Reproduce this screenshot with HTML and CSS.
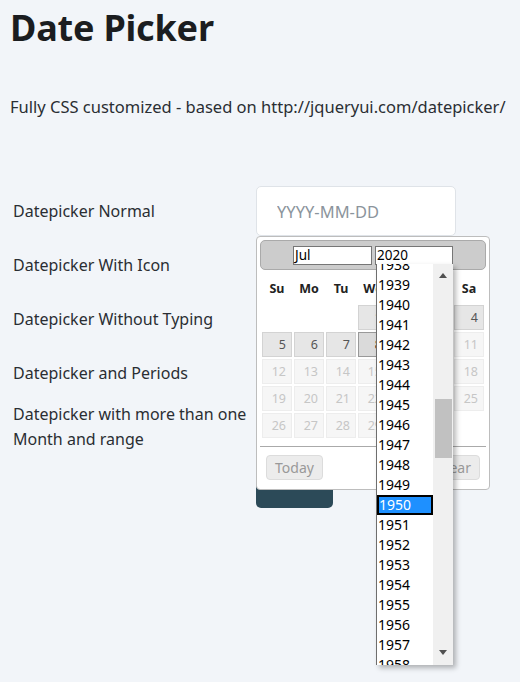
FILE: index.html
```html
<!DOCTYPE html>
<html lang="en">
<head>
<meta charset="utf-8">
<title>Date Picker</title>
<link rel="stylesheet" href="styles.css">
</head>
<body>
<main class="page">
  <h1 class="title">Date Picker</h1>
  <p class="lead">Fully CSS customized - based on http://jqueryui.com/datepicker/</p>

  <form class="form">
    <div class="row">
      <label class="lbl">Datepicker Normal</label>
      <div class="field">
        <input class="inp" type="text" placeholder="YYYY-MM-DD">
        <div class="dp">
          <div class="dp-head">
            <div class="sel sel-month">Jul</div>
            <div class="sel sel-year">2020</div>
          </div>
          <table class="dp-table">
            <thead>
              <tr><th>Su</th><th>Mo</th><th>Tu</th><th>We</th><th>Th</th><th>Fr</th><th>Sa</th></tr>
            </thead>
            <tbody>
              <tr><td></td><td></td><td></td><td class="d on">1</td><td class="d on">2</td><td class="d on">3</td><td class="d on">4</td></tr>
              <tr><td class="d on">5</td><td class="d on">6</td><td class="d on">7</td><td class="d hl">8</td><td class="d off">9</td><td class="d off">10</td><td class="d off">11</td></tr>
              <tr><td class="d off">12</td><td class="d off">13</td><td class="d off">14</td><td class="d off">15</td><td class="d off">16</td><td class="d off">17</td><td class="d off">18</td></tr>
              <tr><td class="d off">19</td><td class="d off">20</td><td class="d off">21</td><td class="d off">22</td><td class="d off">23</td><td class="d off">24</td><td class="d off">25</td></tr>
              <tr><td class="d off">26</td><td class="d off">27</td><td class="d off">28</td><td class="d off">29</td><td class="d off">30</td><td class="d off">31</td><td></td></tr>
            </tbody>
          </table>
          <div class="dp-pane">
            <button type="button" class="dp-btn">Today</button>
            <button type="button" class="dp-btn">Clear</button>
          </div>

          <div class="drop">
            <div class="opts">
              <div class="opts-in">
                <div class="opt">1938</div>
                <div class="opt">1939</div>
                <div class="opt">1940</div>
                <div class="opt">1941</div>
                <div class="opt">1942</div>
                <div class="opt">1943</div>
                <div class="opt">1944</div>
                <div class="opt">1945</div>
                <div class="opt">1946</div>
                <div class="opt">1947</div>
                <div class="opt">1948</div>
                <div class="opt">1949</div>
                <div class="opt opt-sel">1950</div>
                <div class="opt">1951</div>
                <div class="opt">1952</div>
                <div class="opt">1953</div>
                <div class="opt">1954</div>
                <div class="opt">1955</div>
                <div class="opt">1956</div>
                <div class="opt">1957</div>
                <div class="opt">1958</div>
              </div>
            </div>
            <div class="sb">
              <div class="sb-btn"><span class="arr-up"></span></div>
              <div class="sb-thumb"></div>
              <div class="sb-btn sb-btn-down"><span class="arr-down"></span></div>
            </div>
          </div>
        </div>
      </div>
    </div>
    <div class="row">
      <label class="lbl">Datepicker With Icon</label>
      <div class="field"><input class="inp" type="text" placeholder="YYYY-MM-DD"></div>
    </div>
    <div class="row">
      <label class="lbl">Datepicker Without Typing</label>
      <div class="field"><input class="inp" type="text" placeholder="YYYY-MM-DD"></div>
    </div>
    <div class="row">
      <label class="lbl">Datepicker and Periods</label>
      <div class="field"><input class="inp" type="text" placeholder="YYYY-MM-DD"></div>
    </div>
    <div class="row">
      <label class="lbl">Datepicker with more than one Month and range</label>
      <div class="field"><input class="inp" type="text" placeholder="YYYY-MM-DD"></div>
    </div>
    <div class="actions">
      <button type="button" class="save">Save</button>
    </div>
  </form>
</main>
</body>
</html>
```

FILE: styles.css
```css
html, body {
  margin: 0;
  padding: 0;
}

html {
  background: #f2f5f9;
}

body {
  min-height: 682px;
  background: #f2f5f9;
  font-family: "Noto Sans", "Open Sans", sans-serif;
  color: #212529;
}

.page {
  box-sizing: border-box;
  min-height: 682px;
  padding: 4px 10px 0 10px;
}

.title {
  margin: 0;
  font-size: 36px;
  line-height: 48px;
  font-weight: 700;
  letter-spacing: -0.2px;
  color: #1b1d20;
}

.lead {
  margin: 43px 0 0 0;
  font-size: 16.5px;
  line-height: 24px;
  color: #2a2e33;
}

.form {
  margin-top: 67px;
}

.row {
  display: grid;
  grid-template-columns: 246px 200px;
  align-items: center;
  margin-bottom: 4px;
}

.lbl {
  padding-left: 3px;
  font-size: 16px;
  line-height: 25px;
  color: #2a2e33;
}

.field {
  position: relative;
}

.inp {
  display: block;
  box-sizing: border-box;
  width: 200px;
  height: 50px;
  padding: 0 20px;
  border: 1px solid #dfe3e8;
  border-radius: 5px;
  background: #fff;
  font-family: inherit;
  font-size: 16.5px;
  color: #333;
}

.inp::placeholder {
  color: #8b949c;
}

.actions {
  margin-top: 16px;
  padding-left: 246px;
}

.save {
  box-sizing: border-box;
  width: 77px;
  height: 40px;
  padding: 0 0 10px 0;
  border: 0;
  border-radius: 5px;
  background: #2c4a58;
  color: #fff;
  font-family: inherit;
  font-size: 16px;
}

/* datepicker popup */
.dp {
  position: absolute;
  top: 100%;
  left: 0;
  z-index: 5;
  box-sizing: border-box;
  width: 234px;
  padding: 3px;
  background: #fff;
  border: 1px solid #bdbdbd;
  border-radius: 4px;
}

.dp-head {
  box-sizing: border-box;
  height: 30px;
  display: flex;
  justify-content: center;
  align-items: center;
  gap: 3px;
  background: #cccccc;
  border: 1px solid #aaaaaa;
  border-radius: 5px;
}

.sel {
  box-sizing: border-box;
  height: 19px;
  padding-left: 1px;
  border: 1px solid #767676;
  background: #fff;
  font-size: 13.5px;
  line-height: 17px;
  color: #000;
}

.sel-month {
  width: 79px;
}

.sel-year {
  width: 78px;
}

.dp-table {
  width: 100%;
  margin-top: 2px;
  border-collapse: separate;
  border-spacing: 2px;
}

.dp-table th {
  padding: 6px 2px;
  font-size: 12.5px;
  line-height: 17px;
  font-weight: 700;
  color: #222;
  text-align: center;
}

.d {
  box-sizing: border-box;
  height: 25px;
  padding: 0 5px;
  border: 1px solid transparent;
  font-size: 12.5px;
  line-height: 23px;
  text-align: right;
}

.on {
  background: #e6e6e6;
  border-color: #d3d3d3;
  color: #555;
}

.hl {
  background: #dadada;
  border-color: #999;
  color: #212121;
}

.off {
  background: #f6f6f6;
  border-color: #ededed;
  color: #c6c6c6;
}

.dp-pane {
  margin-top: 6px;
  padding: 8px 6px 6px 6px;
  border-top: 1px solid #aaaaaa;
  display: flex;
  justify-content: space-between;
}

.dp-btn {
  box-sizing: border-box;
  height: 25px;
  padding: 0 8px;
  border: 1px solid #dcdcdc;
  border-radius: 4px;
  background: #ececec;
  color: #999;
  font-family: inherit;
  font-size: 14px;
  line-height: 23px;
}

/* open year dropdown */
.drop {
  position: absolute;
  left: 119px;
  top: 27px;
  width: 77px;
  height: 401px;
  display: flex;
  background: #fff;
  box-shadow: 3px 3px 5px rgba(0, 0, 0, 0.28);
  z-index: 6;
}

.opts {
  box-sizing: border-box;
  width: 57px;
  height: 401px;
  overflow: hidden;
  border-left: 1px solid #6e6e6e;
}

.opts-in {
  margin-top: -9px;
}

.opt {
  box-sizing: border-box;
  height: 20px;
  padding-left: 1px;
  font-size: 14px;
  line-height: 20px;
  color: #000;
}

.opt-sel {
  background: #1e90ff;
  color: #fff;
  border: 2px solid #000;
  padding-left: 0;
  line-height: 16px;
}

.sb {
  width: 20px;
  height: 401px;
  background: #f0f0f0;
  display: flex;
  flex-direction: column;
  align-items: center;
}

.sb-btn {
  width: 20px;
  height: 20px;
  display: flex;
  justify-content: center;
  align-items: center;
}

.sb-btn-down {
  margin-top: auto;
  height: 22px;
}

.arr-up {
  width: 0;
  height: 0;
  margin-top: 3px;
  border-left: 4px solid transparent;
  border-right: 4px solid transparent;
  border-bottom: 5px solid #505050;
}

.arr-down {
  width: 0;
  height: 0;
  margin-bottom: 3px;
  border-left: 4px solid transparent;
  border-right: 4px solid transparent;
  border-top: 5px solid #505050;
}

.sb-thumb {
  width: 17px;
  height: 59px;
  margin-top: 115px;
  background: #c1c1c1;
}
```
